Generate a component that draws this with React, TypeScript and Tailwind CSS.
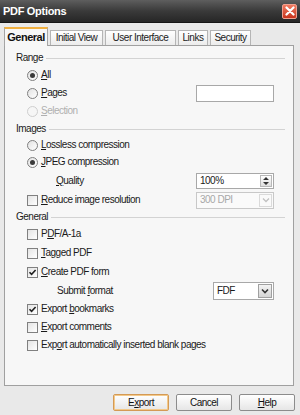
import React from "react";

const font = { fontFamily: '"Liberation Sans", Arial, sans-serif' };

function U({ children }: { children: React.ReactNode }) {
  return <span className="underline underline-offset-[1px]">{children}</span>;
}

function Radio({ checked, disabled }: { checked?: boolean; disabled?: boolean }) {
  return (
    <span
      className={`flex items-center justify-center w-[11px] h-[11px] rounded-full border shrink-0 ${
        disabled ? "border-[#cfcfcf] bg-[#f6f6f6]" : "border-[#7f7f7f] bg-gradient-to-br from-[#e2e2e2] to-white"
      }`}
    >
      {checked && <span className="w-[5px] h-[5px] rounded-full bg-[#3a3a3a]" />}
    </span>
  );
}

function Check({ checked }: { checked?: boolean }) {
  return (
    <span className="flex items-center justify-center w-[11px] h-[11px] border border-[#808080] bg-gradient-to-br from-[#e4e4e4] to-white shrink-0">
      {checked && (
        <svg width="9" height="9" viewBox="0 0 9 9">
          <path d="M1.5 4.2 L3.6 6.4 L7.6 2" stroke="#222" strokeWidth="1.6" fill="none" />
        </svg>
      )}
    </span>
  );
}

function Header({ label, h }: { label: string; h: string }) {
  return (
    <div className={`flex items-center ${h} pl-[11px] pr-[8px] gap-[3px]`}>
      <span className="text-[#1a1a1a]">{label}</span>
      <span className="flex-1 h-px bg-[#d3d3d3]" />
    </div>
  );
}

function Tab({ label, w, active }: { label: string; w: string; active?: boolean }) {
  if (active)
    return (
      <div
        className={`${w} h-[19px] -mb-px flex items-center justify-center whitespace-nowrap bg-[#f7f7f7] border-x border-[#a5a5a5] border-t-2 border-t-[#f0b040] font-bold text-[#111] text-[11px] relative z-10`}
      >
        {label}
      </div>
    );
  return (
    <div
      className={`${w} h-[15px] flex items-center justify-center whitespace-nowrap bg-gradient-to-b from-white to-[#ececec] border-x border-t border-[#b5b5b5] text-[#222]`}
    >
      {label}
    </div>
  );
}

function Btn({ children, def }: { children: React.ReactNode; def?: boolean }) {
  return (
    <div
      className={`w-[56px] h-[17px] flex items-center justify-center rounded-[2px] border bg-gradient-to-b from-white to-[#e6e6e6] text-[#111] ${
        def ? "border-[#d49a55] shadow-[inset_0_0_0_1px_#f3c98a]" : "border-[#8c8c8c]"
      }`}
    >
      {children}
    </div>
  );
}

export default function App() {
  return (
    <div
      className="w-[300px] h-[415px] bg-[#e9e9e9] flex flex-col text-[10px] tracking-[-0.5px] leading-none overflow-hidden"
      style={font}
    >
      {/* title bar */}
      <div className="h-[23px] flex items-center justify-between pl-[3px] pr-[3px] bg-gradient-to-b from-[#5e5e5e] via-[#3a3a3a] to-[#262626] border-b border-[#151515]">
        <span className="text-white font-bold text-[11px] tracking-[-0.3px]">PDF Options</span>
        <span className="w-[15px] h-[15px] flex items-center justify-center rounded-[2px] border border-[#f0a090] bg-gradient-to-b from-[#f07a60] to-[#c8321a]">
          <svg width="10" height="10" viewBox="0 0 10 10">
            <path d="M1.5 1.5 L8.5 8.5 M8.5 1.5 L1.5 8.5" stroke="white" strokeWidth="2.2" strokeLinecap="round" />
          </svg>
        </span>
      </div>

      {/* tabs */}
      <div className="flex items-end h-[22px] pl-[4px] gap-[2px]">
        <Tab label="General" w="w-[44px]" active />
        <Tab label="Initial View" w="w-[53px]" />
        <Tab label="User Interface" w="w-[71px]" />
        <Tab label="Links" w="w-[30px]" />
        <Tab label="Security" w="w-[41px]" />
      </div>

      {/* panel */}
      <div className="ml-[4px] w-[290px] h-[341px] border border-[#a0a0a0] bg-[#f7f7f7] flex flex-col pt-[4px] text-[#1a1a1a]">
        <Header label="Range" h="h-[16px]" />
        <div className="flex items-center h-[18px] pl-[22px] gap-[3px]">
          <Radio checked />
          <span>
            <U>A</U>ll
          </span>
        </div>
        <div className="flex items-center h-[18px] pl-[22px] pr-[19px] gap-[3px]">
          <Radio />
          <span>
            <U>P</U>ages
          </span>
          <span className="ml-auto w-[78px] h-[17px] border border-[#a8a8a8] bg-white" />
        </div>
        <div className="flex items-center h-[18px] pl-[22px] gap-[3px] text-[#b0b0b0]">
          <Radio disabled />
          <span>
            <U>S</U>election
          </span>
        </div>

        <Header label="Images" h="h-[18px]" />
        <div className="flex items-center h-[14px] pl-[22px] gap-[3px]">
          <Radio />
          <span>
            <U>L</U>ossless compression
          </span>
        </div>
        <div className="flex items-center h-[20px] pl-[22px] gap-[3px]">
          <Radio checked />
          <span>
            <U>J</U>PEG compression
          </span>
        </div>
        <div className="flex items-center h-[18px] pl-[51px] pr-[19px]">
          <span>
            <U>Q</U>uality
          </span>
          <span className="ml-auto w-[78px] h-[16px] border border-[#a8a8a8] bg-white flex items-center pl-[3px] pr-[1px]">
            <span>100%</span>
            <span className="ml-auto w-[12px] h-[12px] flex flex-col items-center justify-center border border-[#b8b8b8] bg-gradient-to-b from-white to-[#dedede]">
              <svg width="8" height="10" viewBox="0 0 8 10">
                <path d="M1 4 L4 1 L7 4 Z M1 6 L4 9 L7 6 Z" fill="#333" />
              </svg>
            </span>
          </span>
        </div>
        <div className="flex items-center h-[20px] pl-[22px] pr-[19px] gap-[3px]">
          <Check />
          <span>
            <U>R</U>educe image resolution
          </span>
          <span className="ml-auto w-[78px] h-[17px] border border-[#c8c8c8] bg-[#fafafa] flex items-center pl-[3px] pr-[1px] text-[#a8a8a8]">
            <span>300 DPI</span>
            <span className="ml-auto w-[13px] h-[13px] flex items-center justify-center border border-[#dadada]">
              <svg width="8" height="6" viewBox="0 0 8 6">
                <path d="M1 1.5 L4 4.5 L7 1.5" stroke="#c0c0c0" strokeWidth="1.3" fill="none" />
              </svg>
            </span>
          </span>
        </div>

        <Header label="General" h="h-[14px]" />
        <div className="flex items-center h-[20px] pl-[22px] gap-[3px]">
          <Check />
          <span>
            P<U>D</U>F/A-1a
          </span>
        </div>
        <div className="flex items-center h-[18px] pl-[22px] gap-[3px]">
          <Check />
          <span>
            <U>T</U>agged PDF
          </span>
        </div>
        <div className="flex items-center h-[20px] pl-[22px] gap-[3px]">
          <Check checked />
          <span>
            <U>C</U>reate PDF form
          </span>
        </div>
        <div className="flex items-center h-[18px] pl-[52px] pr-[19px]">
          <span>
            Submit <U>f</U>ormat
          </span>
          <span className="ml-auto w-[61px] h-[18px] border border-[#a8a8a8] bg-white flex items-center pl-[3px] pr-[1px]">
            <span>FDF</span>
            <span className="ml-auto w-[14px] h-[14px] flex items-center justify-center border border-[#a0a0a0] bg-gradient-to-b from-[#f4f4f4] to-[#d4d4d4]">
              <svg width="8" height="6" viewBox="0 0 8 6">
                <path d="M1 1.5 L4 4.5 L7 1.5" stroke="#333" strokeWidth="1.6" fill="none" />
              </svg>
            </span>
          </span>
        </div>
        <div className="flex items-center h-[18px] pl-[22px] gap-[3px]">
          <Check checked />
          <span>
            Export <U>b</U>ookmarks
          </span>
        </div>
        <div className="flex items-center h-[18px] pl-[22px] gap-[3px]">
          <Check />
          <span>
            <U>E</U>xport comments
          </span>
        </div>
        <div className="flex items-center h-[18px] pl-[22px] gap-[3px]">
          <Check />
          <span>
            Exp<U>o</U>rt automatically inserted blank pages
          </span>
        </div>
      </div>

      {/* buttons */}
      <div className="flex justify-end gap-[7px] pr-[5px] mt-[8px]">
        <Btn def>
          E<U>x</U>port
        </Btn>
        <Btn>Cancel</Btn>
        <Btn>
          <U>H</U>elp
        </Btn>
      </div>
    </div>
  );
}
